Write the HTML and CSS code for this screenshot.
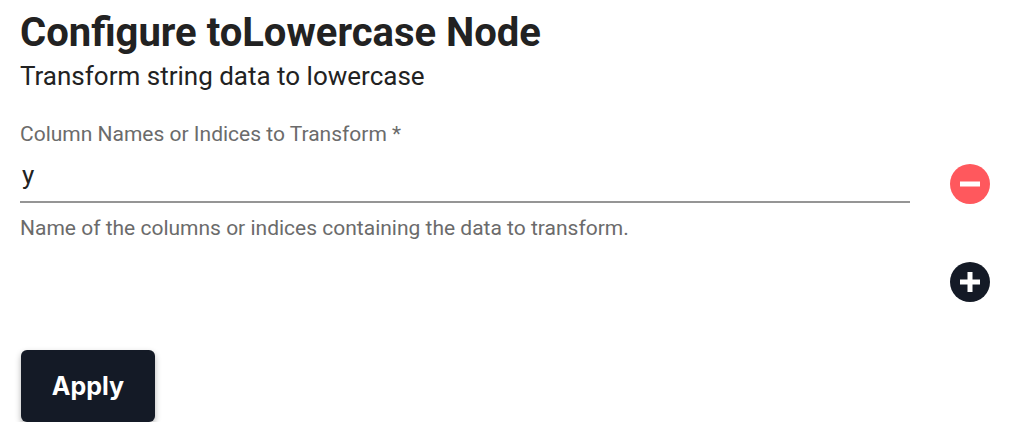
FILE: index.html
```html
<!DOCTYPE html>
<html lang="en">
<head>
    <meta charset="UTF-8">
    <meta name="viewport" content="width=device-width, initial-scale=1.0">
    <title>Configure toLowercase Node</title>
    <link rel="stylesheet" href="styles.css">
</head>
<body>

<div class="page">
  <h1 class="title">Configure toLowercase Node</h1>
  <p class="subtitle">Transform string data to lowercase</p>

  <div class="field-row">
    <div class="field">
      <label class="field-label">Column Names or Indices to Transform *</label>
      <div class="field-input">y</div>
      <p class="field-helper">Name of the columns or indices containing the data to transform.</p>
    </div>
    <div class="icon-col">
      <button class="icon-btn remove" aria-label="Remove">
        <svg width="40" height="40" viewBox="0 0 40 40">
          <circle cx="20" cy="20" r="20" fill="#ff585d"/>
          <rect x="10" y="17.5" width="20" height="5" fill="#fff"/>
        </svg>
      </button>
    </div>
  </div>

  <div class="add-row">
    <button class="icon-btn add" aria-label="Add">
      <svg width="40" height="40" viewBox="0 0 40 40">
        <circle cx="20" cy="20" r="20" fill="#141a26"/>
        <rect x="10" y="17.5" width="20" height="5" fill="#fff"/>
        <rect x="17.5" y="10" width="5" height="20" fill="#fff"/>
      </svg>
    </button>
  </div>

  <button class="apply">Apply</button>
</div>

</body>
</html>
```

FILE: styles.css
```css
body {
    margin: 0;
    padding: 0;
    font-family: Roboto, "Liberation Sans", sans-serif;
    color: #222;
    background: #fff;
}
.page {
    padding: 9px 44px 0 20px;
}
.title {
    margin: 0;
    font-size: 40px;
    font-weight: 700;
    line-height: 48px;
    color: #222;
}
.subtitle {
    margin: 3px 0 0;
    font-size: 26px;
    line-height: 32px;
    color: #222;
}
.field-row {
    display: flex;
    align-items: flex-start;
    margin-top: 28px;
}
.field {
    flex: 1;
}
.field-label {
    display: block;
    font-size: 21px;
    line-height: 28px;
    color: #6b6b6b;
}
.field-input {
    font-size: 26px;
    line-height: 32px;
    padding: 11px 2px 10px;
    color: #222;
    border-bottom: 2px solid #959595;
}
.field-helper {
    margin: 11px 0 0;
    font-size: 21px;
    line-height: 28px;
    color: #6b6b6b;
}
.icon-col {
    width: 80px;
    display: flex;
    justify-content: flex-end;
    padding-top: 44px;
}
.icon-btn {
    border: 0;
    padding: 0;
    background: none;
    width: 40px;
    height: 40px;
    display: block;
}
.add-row {
    display: flex;
    justify-content: flex-end;
    margin-top: 20px;
}
.apply {
    display: block;
    margin: 48px 0 0 1px;
    width: 134px;
    height: 72px;
    border: 0;
    border-radius: 6px;
    background: #141a26;
    color: #fff;
    font-family: Inter, "Liberation Sans", sans-serif;
    font-size: 25px;
    font-weight: 700;
    box-shadow: 0 3px 6px rgba(0, 0, 0, 0.3);
}
```
